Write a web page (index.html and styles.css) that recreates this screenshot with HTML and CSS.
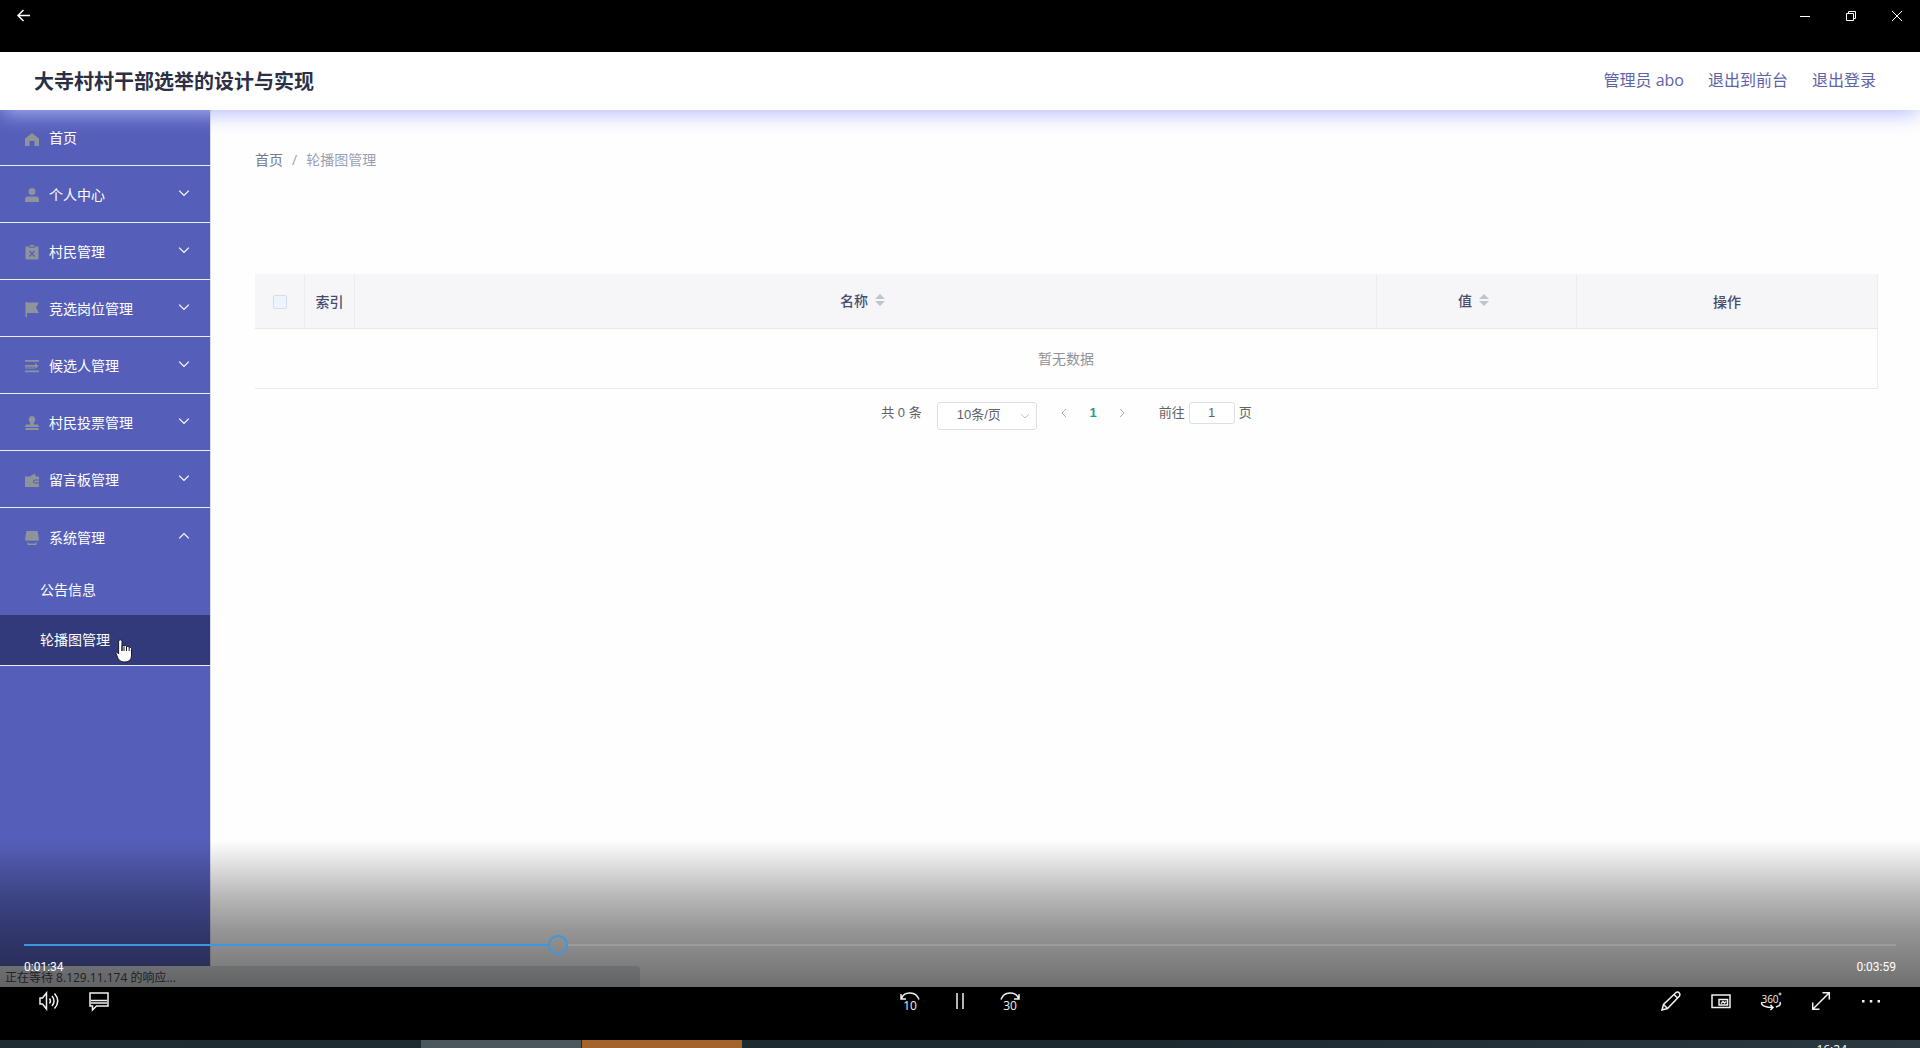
FILE: index.html
```html
<!DOCTYPE html>
<html lang="zh-CN">
<head>
<meta charset="utf-8">
<title>大寺村村干部选举的设计与实现</title>
<link rel="stylesheet" href="styles.css">
</head>
<body>
<div class="titlebar">
  <button class="win-btn back" aria-label="返回"><svg width="14" height="14" viewBox="0 0 14 14"><path d="M13 6.500H1.500M6.500 1L1 6.500 6.500 12"/></svg></button>
  <div class="win-group">
    <button class="win-btn" aria-label="最小化"><svg width="12" height="12" viewBox="0 0 12 12"><path d="M1 6.500h10"/></svg></button>
    <button class="win-btn" aria-label="还原"><svg width="12" height="12" viewBox="0 0 12 12"><path d="M1.500 3.500h7v7h-7zM3.500 3.500v-2h7v7h-2"/></svg></button>
    <button class="win-btn" aria-label="关闭"><svg width="12" height="12" viewBox="0 0 12 12"><path d="M1 1l10 10M11 1L1 11"/></svg></button>
  </div>
</div>

<div class="video">
  <div class="app">
    <header class="header">
      <h1 class="site-title">大寺村村干部选举的设计与实现</h1>
      <nav class="user-nav">
        <span>管理员 abo</span>
        <a href="#">退出到前台</a>
        <a href="#">退出登录</a>
      </nav>
    </header>
    <div class="app-body">
      <aside class="sidebar">
        <ul class="menu">
          <li class="menu-item home"><a href="#" class="menu-link">
            <svg class="icon" viewBox="0 0 14 14"><path d="M7 0l7 5.500V13H9.500V8h-5v5H0V5.500z"/></svg>首页</a></li>
          <li class="menu-item"><a href="#" class="menu-link">
            <svg class="icon" viewBox="0 0 14 14"><circle cx="7" cy="3.500" r="3.500"/><path d="M0 14v-2.500Q0 8.500 3 8.500h8q3 0 3 3V14z"/></svg>个人中心<svg class="chevron" viewBox="0 0 10 6"><path d="M1 1l4 4 4-4"/></svg></a></li>
          <li class="menu-item"><a href="#" class="menu-link">
            <svg class="icon" viewBox="0 0 14 14"><path d="M0.500 1.500H4v1.200h6V1.500h3.500V14.500H0.500zM4.700 0h4.600v1.700H4.700z"/><path class="mark" d="M4.500 6l5 5.500M9.500 6l-5 5.500"/></svg>村民管理<svg class="chevron" viewBox="0 0 10 6"><path d="M1 1l4 4 4-4"/></svg></a></li>
          <li class="menu-item"><a href="#" class="menu-link">
            <svg class="icon" viewBox="0 0 14 14"><path d="M0.500 0H2v15H0.500zM2 0.500H14L11 5.500l3 5.500H2z"/></svg>竞选岗位管理<svg class="chevron" viewBox="0 0 10 6"><path d="M1 1l4 4 4-4"/></svg></a></li>
          <li class="menu-item"><a href="#" class="menu-link">
            <svg class="icon" viewBox="0 0 14 14"><path d="M0 1h14v1.700H0zM0 11.500h14v1.700H0zM0 6h10v1.700H0zM0 8.500h9v1H0zM10 4l3.500 3L10 10z"/></svg>候选人管理<svg class="chevron" viewBox="0 0 10 6"><path d="M1 1l4 4 4-4"/></svg></a></li>
          <li class="menu-item"><a href="#" class="menu-link">
            <svg class="icon" viewBox="0 0 14 14"><path d="M7 0a3.500 3.500 0 0 1 2.300 6q-.8 1-.3 2.500h3.500Q14 8.500 14 11H0q0-2.500 1.500-2.500H5Q5.500 7 4.700 6A3.500 3.500 0 0 1 7 0zM0.500 12h13v2H0.500z"/></svg>村民投票管理<svg class="chevron" viewBox="0 0 10 6"><path d="M1 1l4 4 4-4"/></svg></a></li>
          <li class="menu-item"><a href="#" class="menu-link">
            <svg class="icon" viewBox="0 0 14 14"><path fill-rule="evenodd" d="M0 3.500h5L9.500 0.500 11 3.500h3v3h-4a2 2 0 0 0 0 4h4v3.500H0zM10 7.500h4v2h-4a1 1 0 0 1 0-2z"/></svg>留言板管理<svg class="chevron" viewBox="0 0 10 6"><path d="M1 1l4 4 4-4"/></svg></a></li>
          <li class="menu-item open"><a href="#" class="menu-link">
            <svg class="icon" viewBox="0 0 14 14"><path d="M1.500 0h11L14 8q0 2-1.500 2T11 9q-.8 1-2 1T7 9q-.8 1-2 1T3 9q-.5 1-1.500 1T0 8zM2.500 11h1v1.500h7V11h1v3h-9z"/></svg>系统管理<svg class="chevron" viewBox="0 0 10 6"><path d="M1 5l4-4 4 4"/></svg></a>
            <ul class="submenu">
              <li><a href="#" class="sub-link">公告信息</a></li>
              <li><a href="#" class="sub-link active">轮播图管理<svg class="cursor" viewBox="0 0 18 24"><path d="M7 12V2.500a1.700 1.700 0 0 0-3.400 0V15L3 14Q1.500 12.500.7 13.800L2 17q1.500 5.500 6.500 6 7.500.5 8-6V9.500q-1-2-2.300-.5v-1q-1.300-1.500-2.700 0V7Q10.200 5.500 9 7v-.500H7z"/><path d="M9 7.500V12M11.500 8v4M14.200 9v3"/></svg></a></li>
            </ul></li>
        </ul>
      </aside>
      <main class="content">
        <nav class="breadcrumb" aria-label="面包屑">
          <a href="#">首页</a><span class="sep">/</span><span>轮播图管理</span>
        </nav>
        <table class="data-table">
          <colgroup><col class="c-narrow"><col class="c-narrow"><col><col class="c-value"><col class="c-action"></colgroup>
          <thead>
            <tr>
              <th><input type="checkbox" class="check" aria-label="全选"></th>
              <th>索引</th>
              <th><span class="sortable">名称<svg class="sort" viewBox="0 0 10 12"><path d="M0 5l5-5 5 5zM0 7l5 5 5-5z"/></svg></span></th>
              <th><span class="sortable">值<svg class="sort" viewBox="0 0 10 12"><path d="M0 5l5-5 5 5zM0 7l5 5 5-5z"/></svg></span></th>
              <th>操作</th>
            </tr>
          </thead>
          <tbody><tr><td colspan="5">暂无数据</td></tr></tbody>
        </table>
        <div class="pagination">
          <span>共 0 条</span>
          <span class="select-wrap"><select class="page-size" aria-label="每页条数"><option>10条/页</option></select><svg class="select-arrow" viewBox="0 0 10 6"><path d="M1 1l4 4 4-4"/></svg></span>
          <div class="pager">
            <button class="page-btn" aria-label="上一页"><svg viewBox="0 0 6 10"><path d="M5 1L1 5l4 4"/></svg></button>
            <button class="page-btn current">1</button>
            <button class="page-btn" aria-label="下一页"><svg viewBox="0 0 6 10"><path d="M1 1l4 4-4 4"/></svg></button>
          </div>
          <label class="jumper">前往<input type="text" value="1">页</label>
        </div>
      </main>
    </div>
    <div class="status">正在等待 8.129.11.174 的响应...</div>
  </div>
  <div class="scrub">
    <input type="range" class="seek" min="0" max="1000" value="283" aria-label="播放进度" style="--played: 0.283">
    <div class="times"><span>0:01:34</span><span>0:03:59</span></div>
  </div>
</div>

<div class="controls">
  <div class="ctl-group">
    <button class="ctl" aria-label="音量"><svg viewBox="0 0 20 20"><path d="M1 7h2.500L7.500 2v16l-4-5H1zM10.500 7.500q2 2.500 0 5M13 5q4 5 0 10M15.500 2.500q6.500 7.500 0 15"/></svg></button>
    <button class="ctl" aria-label="字幕"><svg viewBox="0 0 20 20"><path d="M1 2h18v13H7.500L3.500 19v-4H1zM2 9.500h16M2 12h16"/></svg></button>
  </div>
  <div class="ctl-group">
    <button class="ctl" aria-label="后退 10 秒"><svg viewBox="0 0 20 20"><path d="M19 8.500C16 0 4 0 1.500 7.500M1 3v5h5"/><text x="10" y="19" text-anchor="middle">10</text></svg></button>
    <button class="ctl" aria-label="暂停"><svg viewBox="0 0 20 20"><path d="M7 2v16M13 2v16"/></svg></button>
    <button class="ctl" aria-label="前进 30 秒"><svg viewBox="0 0 20 20"><path d="M1 8.500C4 0 16 0 18.500 7.500M19 3v5h-5"/><text x="10" y="19" text-anchor="middle">30</text></svg></button>
  </div>
  <div class="ctl-group end">
    <button class="ctl" aria-label="编辑"><svg viewBox="0 0 20 20"><path d="M1 19l1.500-5.500L15 1.500q2-1 3.300.5T18.500 5L6.500 17.500zM13 3.500l3.500 3.500M2.500 13.500l4 4"/></svg></button>
    <button class="ctl" aria-label="迷你视图"><svg viewBox="0 0 20 20"><path d="M1 4h18v12.500H1zM8 8.500h8.500v5.500H8zM10 12.500l2-2 1.500 1.500 1.500-1.500"/></svg></button>
    <button class="ctl" aria-label="360 度"><svg viewBox="0 0 20 20"><path d="M1 11C-1 14.500 5 16.500 12 16.500M9.500 14l2.500 2.500L9.500 19M19 11q1.500 3.500-4 5"/><circle class="degree" cx="19" cy="3" r="1"/><text class="deg-text" x="9" y="12" text-anchor="middle">360</text></svg></button>
    <button class="ctl" aria-label="全屏"><svg viewBox="0 0 20 20"><path d="M2 18L18 2M11.500 1.700h6.800v6.800M1.700 11.500v6.800h6.800"/></svg></button>
    <button class="ctl" aria-label="更多"><svg viewBox="0 0 20 20"><path class="dots" d="M1 9h2.500v2.500H1zM8.800 9h2.500v2.500H8.800zM16.500 9H19v2.500h-2.500z"/></svg></button>
  </div>
</div>

<footer class="taskbar">
  <div class="task grey"></div>
  <div class="task orange"></div>
  <time class="clock">16:24</time>
</footer>
</body>
</html>
```
FILE: styles.css
```css
* { box-sizing: border-box; }

body {
  margin: 0;
  height: 100vh;
  display: flex;
  flex-direction: column;
  overflow: hidden;
  background: #000;
  font-family: "Open Sans", "Noto Sans CJK SC", sans-serif;
  font-size: 14px;
}

ul { list-style: none; margin: 0; padding: 0; }
a { color: inherit; text-decoration: none; }
button { background: none; border: 0; padding: 0; font: inherit; color: inherit; }
svg { flex: none; fill: none; }

/* player title bar */
.titlebar {
  flex: none;
  height: 52px;
  display: flex;
  justify-content: space-between;
  align-items: flex-start;
}
.win-group { display: flex; }
.win-btn {
  width: 46px;
  height: 32px;
  display: grid;
  place-items: center;
}
.win-btn svg { stroke: #fff; }
.win-btn.back { width: 48px; }
.win-btn.back svg { stroke-width: 1.5; }

/* recorded page */
.video {
  flex: 1;
  min-height: 0;
  position: relative;
}
.app {
  height: 100%;
  display: flex;
  flex-direction: column;
  overflow: hidden;
  background: #fefefe;
}
.header {
  flex: none;
  height: 58px;
  padding: 0 44px 2px 34px;
  display: flex;
  align-items: center;
  justify-content: space-between;
  background: #fff;
  box-shadow: 0 6px 20px -2px rgba(176, 184, 255, 0.9);
  z-index: 1;
}
.site-title {
  margin: 0;
  font-size: 20px;
  font-weight: 700;
  color: #2b3046;
}
.user-nav {
  display: flex;
  gap: 24px;
  padding-bottom: 2px;
  font-size: 16px;
  color: #5c63a8;
}
.app-body {
  flex: 1;
  min-height: 0;
  display: flex;
}

.sidebar {
  flex: none;
  width: 211px;
  background: #555fb9;
  border-right: 1px solid #dcdef0;
  color: #fff;
}
.menu-item { border-bottom: 1px solid #eceefb; }
.menu-link {
  height: 56px;
  padding: 0 20px 0 25px;
  display: flex;
  align-items: center;
  gap: 10px;
}
.home .menu-link { height: 55px; padding-bottom: 2px; }
.open .menu-link { height: 57px; }
.icon {
  width: 14px;
  height: 14px;
  margin-top: 2px;
  overflow: visible;
  fill: #8f939a;
}
.home .icon { margin-top: 6px; }
.icon .mark { stroke: #555fb9; stroke-width: 1.3; }
.chevron {
  width: 12px;
  height: 8px;
  margin: 0 0 2px auto;
  stroke: #fff;
}
.sub-link {
  position: relative;
  height: 50px;
  padding: 0 0 2px 40px;
  display: flex;
  align-items: center;
}
.sub-link.active { background: #323a7b; }
.cursor {
  position: absolute;
  left: 115px;
  top: 24px;
  width: 18px;
  height: 24px;
  fill: #fff;
  stroke: #15182e;
}

.content {
  flex: 1;
  min-width: 0;
  padding: 40px 42px 0 44px;
}
.breadcrumb {
  display: flex;
  line-height: 20px;
  color: #9aa1b5;
}
.breadcrumb a { color: #74798f; }
.sep { margin: 0 9px; }

.data-table {
  width: 100%;
  margin-top: 104px;
  table-layout: fixed;
  border-collapse: separate;
  border-spacing: 0;
  border-right: 1px solid #ebeef5;
  text-align: center;
}
.c-narrow { width: 50px; }
.c-value { width: 200px; }
.c-action { width: 300px; }
.data-table th {
  height: 55px;
  padding: 0;
  background: #f6f6f9;
  border-right: 1px solid #ebebf0;
  border-bottom: 1px solid #e6e8f0;
  font-weight: 500;
  color: #474c70;
}
.data-table th:last-child { border-right: 0; }
.data-table td {
  height: 60px;
  padding: 0 0 2px;
  border-bottom: 1px solid #e8eaf0;
  color: #909399;
}
.sortable {
  display: inline-flex;
  align-items: center;
  gap: 7px;
  padding: 0 6px 2px 0;
}
.sort { width: 10px; height: 12px; fill: #c0c4cc; }
.check {
  appearance: none;
  display: block;
  width: 14px;
  height: 14px;
  margin: 2px auto 0;
  border: 1px solid #d5dcea;
  border-radius: 2px;
  background: #edf4fd;
}

.pagination {
  display: flex;
  justify-content: center;
  align-items: flex-start;
  margin-top: 13px;
  font-family: "Liberation Sans", "Noto Sans CJK SC", sans-serif;
  font-size: 13px;
  line-height: 22px;
  color: #606266;
}
.select-wrap {
  position: relative;
  margin-left: 15px;
}
.page-size {
  appearance: none;
  display: block;
  width: 100px;
  height: 28px;
  padding: 0 0 2px 19px;
  border: 1px solid #dcdfe6;
  border-radius: 3px;
  background: #fff;
  font: inherit;
  color: inherit;
}
.select-arrow {
  position: absolute;
  right: 7px;
  top: 11px;
  width: 10px;
  height: 6px;
  stroke: #c0c4cc;
}
.pager { display: flex; margin-left: 13px; }
.page-btn {
  width: 29px;
  height: 22px;
  display: grid;
  place-items: center;
}
.page-btn svg { width: 6px; height: 10px; stroke: #a8abb3; }
.page-btn.current { font-weight: 700; color: #12a58a; }
.jumper { display: flex; margin-left: 22px; gap: 4px; }
.jumper input {
  width: 46px;
  height: 22px;
  padding: 0;
  border: 1px solid #dcdfe6;
  border-radius: 3px;
  font: inherit;
  color: inherit;
  text-align: center;
}

/* browser link status bubble */
.status {
  position: absolute;
  left: 0;
  bottom: 0;
  width: 640px;
  max-width: 34%;
  height: 21px;
  padding: 0 5px;
  background: #dee1e6;
  border-radius: 0 4px 0 0;
  font-size: 12px;
  line-height: 24px;
  color: #45464a;
  z-index: 2;
}

/* player overlay */
.scrub {
  position: absolute;
  left: 0;
  right: 0;
  bottom: 0;
  z-index: 3;
  padding: 95px 24px 0;
  height: 147px;
  color: #fff;
  background: linear-gradient(rgba(0, 0, 0, 0), rgba(0, 0, 0, 0.29) 40%, rgba(0, 0, 0, 0.41) 61%, rgba(0, 0, 0, 0.56));
}
.seek {
  --edge: calc((100% - 20px) * var(--played));
  appearance: none;
  display: block;
  width: 100%;
  height: 20px;
  margin: 0;
  background: linear-gradient(90deg, #3d97e0 var(--edge), transparent var(--edge) calc(var(--edge) + 20px), #9c9c9c calc(var(--edge) + 20px)) center / 100% 2px no-repeat;
}
.seek::-webkit-slider-thumb {
  appearance: none;
  width: 20px;
  height: 20px;
  border: 2px solid #3d97e0;
  border-radius: 50%;
  background: transparent;
}
.times {
  display: flex;
  justify-content: space-between;
  margin-top: 2px;
  font-family: Roboto, sans-serif;
  font-size: 12px;
  line-height: 20px;
}

.controls {
  flex: none;
  height: 53px;
  padding: 0 24px;
  display: grid;
  grid-template-columns: 1fr auto 1fr;
}
.ctl-group { display: flex; }
.ctl-group.end { justify-content: flex-end; }
.ctl {
  width: 50px;
  height: 28px;
  display: grid;
  place-items: center;
}
.ctl svg {
  width: 20px;
  height: 20px;
  overflow: visible;
  stroke: #f2f2f2;
  stroke-width: 1.5;
}
.ctl text { fill: #f2f2f2; stroke: none; font-size: 12px; }
.ctl .deg-text { font-size: 10px; }
.ctl .degree { stroke-width: 1; }
.ctl .dots { fill: #f2f2f2; stroke: none; }

.taskbar {
  flex: none;
  height: 8px;
  padding: 0 73px 0 421px;
  display: flex;
  gap: 1px;
  overflow: hidden;
  background: linear-gradient(90deg, #1f2d33, #1c2a30 60%, #2b383f);
}
.task { width: 160px; height: 8px; }
.grey { background: #4b575b; }
.orange { background: #a4632d; }
.clock {
  margin-left: auto;
  padding-top: 2px;
  font-size: 12px;
  line-height: 16px;
  color: #fff;
}
```
